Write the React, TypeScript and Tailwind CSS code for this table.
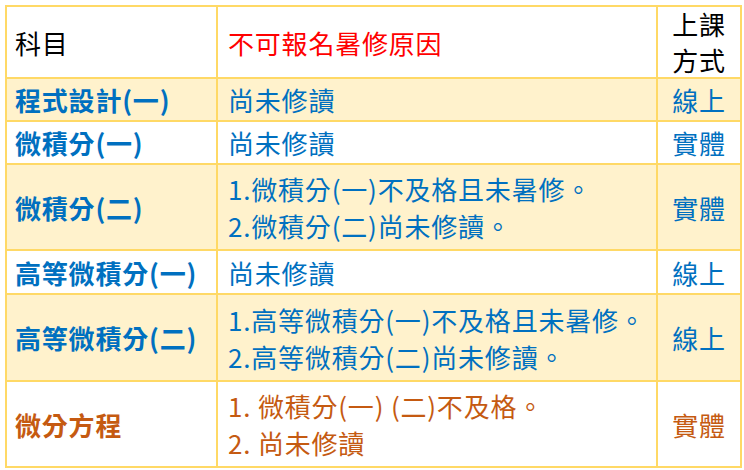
import React from "react";

type Tone = "blue" | "orange";

type Row = {
  subject: string;
  reasons: string[];
  mode: string;
  tone: Tone;
  shaded: boolean;
  h: string;
};

const rows: Row[] = [
  { subject: "程式設計(一)", reasons: ["尚未修讀"], mode: "線上", tone: "blue", shaded: true, h: "h-[43px]" },
  { subject: "微積分(一)", reasons: ["尚未修讀"], mode: "實體", tone: "blue", shaded: false, h: "h-[43px]" },
  {
    subject: "微積分(二)",
    reasons: ["1.微積分(一)不及格且未暑修。", "2.微積分(二)尚未修讀。"],
    mode: "實體",
    tone: "blue",
    shaded: true,
    h: "h-[86px]",
  },
  { subject: "高等微積分(一)", reasons: ["尚未修讀"], mode: "線上", tone: "blue", shaded: false, h: "h-[44px]" },
  {
    subject: "高等微積分(二)",
    reasons: ["1.高等微積分(一)不及格且未暑修。", "2.高等微積分(二)尚未修讀。"],
    mode: "線上",
    tone: "blue",
    shaded: true,
    h: "h-[87px]",
  },
  {
    subject: "微分方程",
    reasons: ["1. 微積分(一) (二)不及格。", "2. 尚未修讀"],
    mode: "實體",
    tone: "orange",
    shaded: false,
    h: "h-[86px]",
  },
];

const cell = "border-r-2 border-b-2 border-[#ffd966] flex items-center";

export default function App() {
  return (
    <div
      className="w-[744px] h-[470px] bg-white pt-[5px] pl-[5px]"
      style={{ fontFamily: '"Noto Sans CJK TC", "Noto Sans", sans-serif' }}
    >
      <div className="grid w-[737px] grid-cols-[211px_440px_84px] border-t-2 border-l-2 border-[#ffd966] text-[26px] leading-[37px] tracking-[0.8px]">
        {/* Header */}
        <div className={`${cell} h-[72px] pl-2 text-black`}>科目</div>
        <div className={`${cell} h-[72px] pl-[10px] text-[#ff0000]`}>不可報名暑修原因</div>
        <div className={`${cell} h-[72px] justify-center text-center leading-[36px] text-black`}>
          上課
          <br />
          方式
        </div>

        {rows.map((r) => {
          const color = r.tone === "blue" ? "text-[#0070c0]" : "text-[#c55a11]";
          const bg = r.shaded ? "bg-[#fff2cc]" : "bg-white";
          return (
            <React.Fragment key={r.subject}>
              <div className={`${cell} ${r.h} ${bg} ${color} pl-2 font-bold whitespace-nowrap`}>
                {r.subject}
              </div>
              <div className={`${cell} ${r.h} ${bg} ${color} pl-[10px]`}>
                <div className="whitespace-nowrap">
                  {r.reasons.map((t) => (
                    <div key={t}>{t}</div>
                  ))}
                </div>
              </div>
              <div className={`${cell} ${r.h} ${bg} ${color} justify-center`}>{r.mode}</div>
            </React.Fragment>
          );
        })}
      </div>
    </div>
  );
}
